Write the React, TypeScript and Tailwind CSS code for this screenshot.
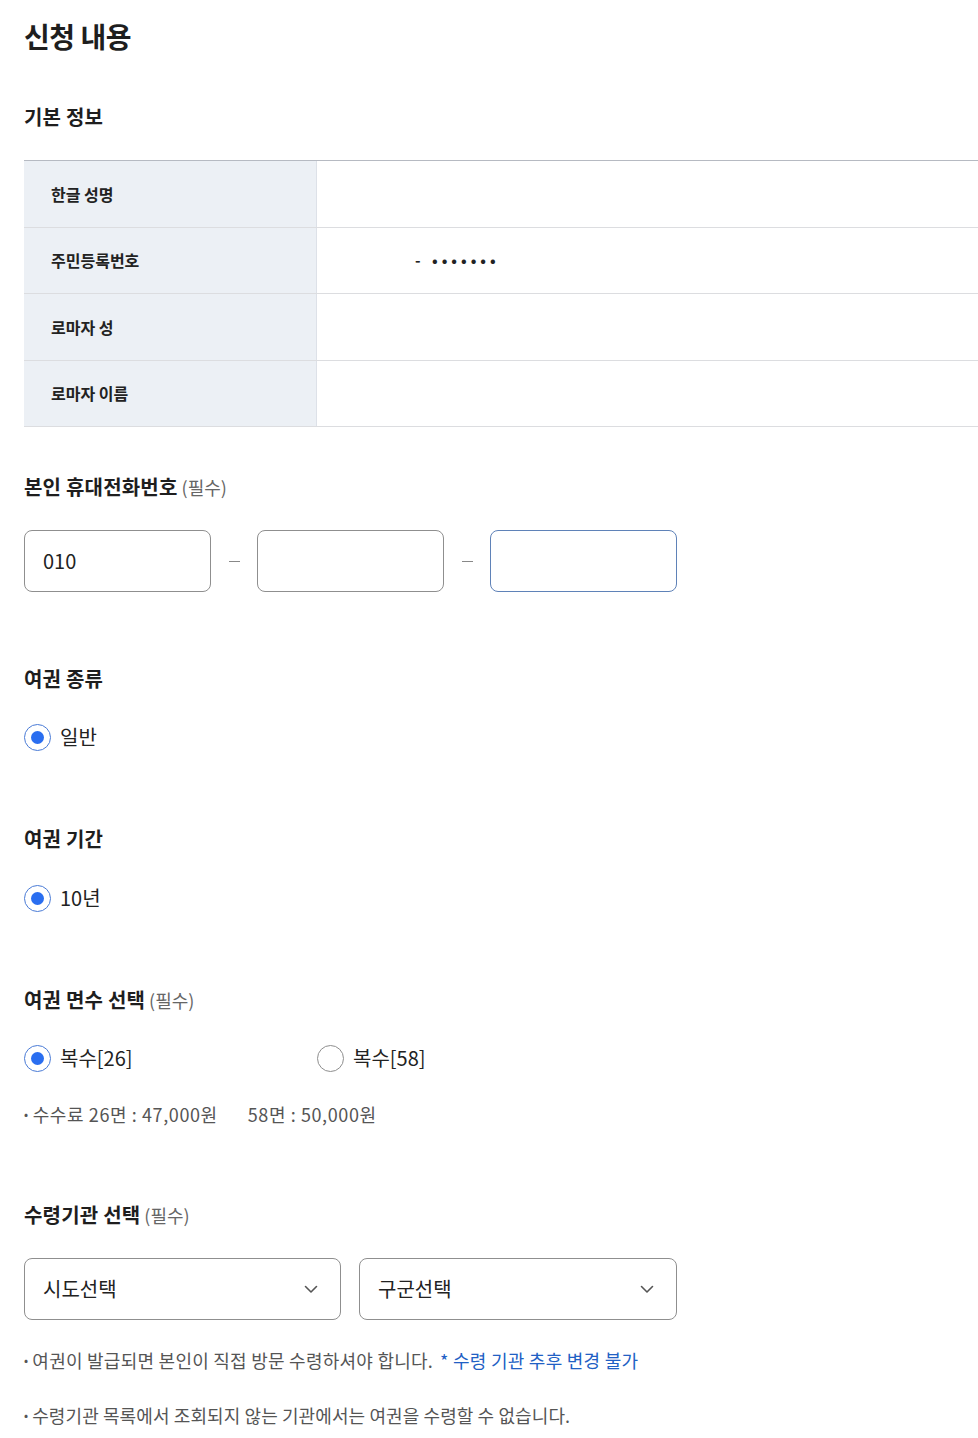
import React from "react";

const font = { fontFamily: '"Noto Sans CJK KR", "Noto Sans", sans-serif' };

function Radio({ checked, label }: { checked?: boolean; label: string }) {
  return (
    <div className="flex items-center h-[30px]">
      {checked ? (
        <span className="w-[27px] h-[27px] rounded-full border-[1.5px] border-[#4a7bd6] flex items-center justify-center bg-white">
          <span className="w-[13px] h-[13px] rounded-full bg-[#2a6ef0]" />
        </span>
      ) : (
        <span className="w-[27px] h-[27px] rounded-full border border-[#8e8e8e] bg-white" />
      )}
      <span className="ml-[9px] text-[20px] leading-[30px] text-[#222]">{label}</span>
    </div>
  );
}

function Heading({ children, req }: { children: React.ReactNode; req?: boolean }) {
  return (
    <div className="h-[30px] leading-[30px] flex items-baseline">
      <span className="text-[20px] font-bold text-[#1e1e1e] tracking-[0.2px]">{children}</span>
      {req && <span className="ml-[4px] text-[18px] text-[#666]">(필수)</span>}
    </div>
  );
}

function Chevron() {
  return (
    <svg width="14" height="9" viewBox="0 0 14 9" fill="none">
      <path d="M1.5 1.5 L7 7 L12.5 1.5" stroke="#555" strokeWidth="1.6" strokeLinecap="round" strokeLinejoin="round" />
    </svg>
  );
}

export default function App() {
  const rows = [
    { label: "한글 성명", value: null },
    { label: "주민등록번호", value: "rrn" },
    { label: "로마자 성", value: null },
    { label: "로마자 이름", value: null },
  ];
  return (
    <div style={font} className="bg-white min-h-[1438px] w-[978px] pl-6 pt-[16px] text-[#1e1e1e]">
      <div className="text-[28px] font-bold leading-[40px] tracking-[-0.5px]">신청 내용</div>

      <div className="mt-[46px]">
        <Heading>기본 정보</Heading>
      </div>

      <div className="mt-[28px] border-t border-[#b6bac2]">
        {rows.map((r) => (
          <div key={r.label} className="flex h-[66.5px] border-b border-[#dcdde0]">
            <div className="w-[293px] bg-[#ecf0f5] border-r border-[#dde1e8] flex items-center pl-[27px] text-[16px] font-bold text-[#222]">
              {r.label}
            </div>
            <div className="flex-1 flex items-center">
              {r.value === "rrn" && (
                <span className="ml-[98px] text-[15px] font-bold text-[#222] tracking-[4px]">- •••••••</span>
              )}
            </div>
          </div>
        ))}
      </div>

      <div className="mt-[45px]">
        <Heading req>본인 휴대전화번호</Heading>
      </div>
      <div className="mt-[28px] flex items-center">
        <div className="w-[187px] h-[62px] rounded-lg border border-[#8f8f8f] flex items-center pl-[18px] text-[20px] text-[#222]">
          010
        </div>
        <div className="w-[46px] flex justify-center">
          <span className="w-[11px] h-px bg-[#888]" />
        </div>
        <div className="w-[187px] h-[62px] rounded-lg border border-[#8f8f8f]" />
        <div className="w-[46px] flex justify-center">
          <span className="w-[11px] h-px bg-[#888]" />
        </div>
        <div className="w-[187px] h-[62px] rounded-lg border border-[#5f82b8]" />
      </div>

      <div className="mt-[72px]">
        <Heading>여권 종류</Heading>
      </div>
      <div className="mt-[28px]">
        <Radio checked label="일반" />
      </div>

      <div className="mt-[72px]">
        <Heading>여권 기간</Heading>
      </div>
      <div className="mt-[29px]">
        <Radio checked label="10년" />
      </div>

      <div className="mt-[72px]">
        <Heading req>여권 면수 선택</Heading>
      </div>
      <div className="mt-[28px] flex">
        <div className="w-[293px]">
          <Radio checked label="복수[26]" />
        </div>
        <Radio label="복수[58]" />
      </div>
      <div className="mt-[29px] h-[24px] leading-[24px] text-[18px] tracking-[0.6px] text-[#555] flex items-center">
        <span className="mr-[4px] text-[12px]">•</span>
        <span>수수료 26면 : 47,000원</span>
        <span className="ml-[30px]">58면 : 50,000원</span>
      </div>

      <div className="mt-[74px]">
        <Heading req>수령기관 선택</Heading>
      </div>
      <div className="mt-[28px] flex gap-[18px]">
        <div className="w-[317px] h-[62px] rounded-lg border border-[#8f8f8f] flex items-center justify-between pl-[18px] pr-[22px] text-[20px] text-[#222]">
          <span>시도선택</span>
          <Chevron />
        </div>
        <div className="w-[318px] h-[62px] rounded-lg border border-[#8f8f8f] flex items-center justify-between pl-[18px] pr-[22px] text-[20px] text-[#222]">
          <span>구군선택</span>
          <Chevron />
        </div>
      </div>

      <div className="mt-[28px] h-[24px] leading-[24px] text-[18px] tracking-[0.25px] text-[#555] flex items-center">
        <span className="mr-[4px] text-[12px]">•</span>
        <span>여권이 발급되면 본인이 직접 방문 수령하셔야 합니다.</span>
        <span className="ml-[7px] text-[#2160c4]">* 수령 기관 추후 변경 불가</span>
      </div>
      <div className="mt-[31px] h-[24px] leading-[24px] text-[18px] tracking-[0.1px] text-[#555] flex items-center">
        <span className="mr-[4px] text-[12px]">•</span>
        <span>수령기관 목록에서 조회되지 않는 기관에서는 여권을 수령할 수 없습니다.</span>
      </div>
    </div>
  );
}
